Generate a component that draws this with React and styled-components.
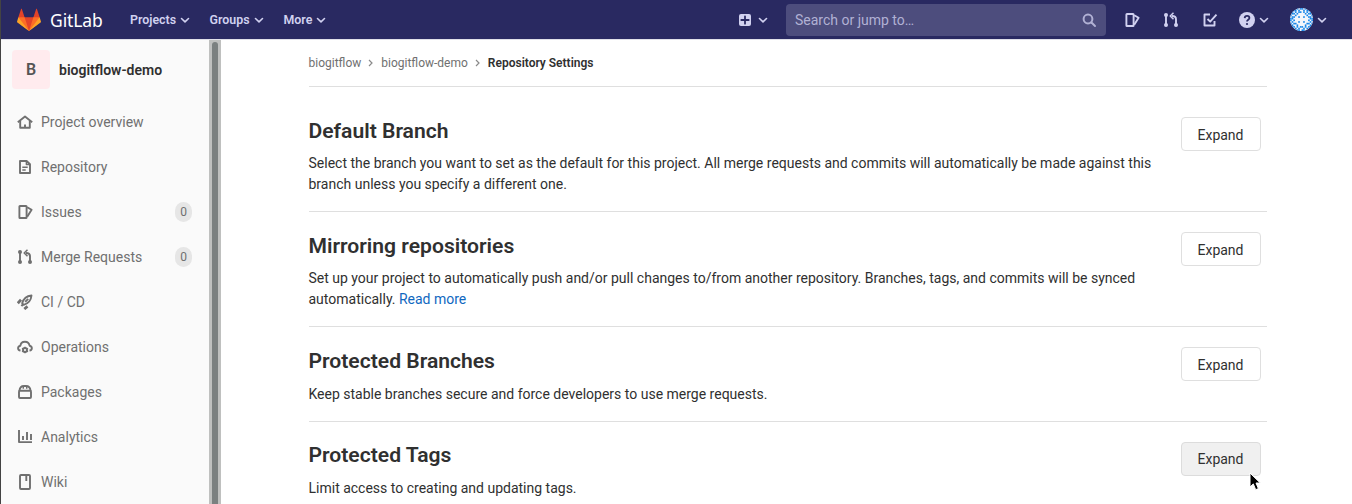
import React from 'react';
import styled, { createGlobalStyle } from 'styled-components';

const Global = createGlobalStyle`
  * { box-sizing: border-box; }
  html, body { margin: 0; height: 100%; overflow: hidden; background: #fff; }
  body { font-family: Roboto, "Noto Sans", sans-serif; font-size: 14px; color: #303030; }
  h2, p { margin: 0; }
`;
const Page = styled.div`
  position: relative;
  display: flex;
  flex-direction: column;
  height: 504px;
  border-left: 1px solid #434343;
  overflow: hidden;
`;
const Navbar = styled.header`
  display: flex;
  align-items: center;
  flex: none;
  height: 40px;
  background: #292961;
  border-bottom: 1px solid #dfdfe8;
  color: #d1d1f0;
`;
const Brand = styled.div`
  display: flex;
  align-items: center;
  width: 129px;
  padding-left: 16px;
  flex: none;
`;
const Wordmark = styled.span`
  margin-left: 9px;
  font: 400 17.5px/24px "Noto Sans", sans-serif;
  letter-spacing: -0.1px;
  color: #fff;
`;
const NavLink = styled.div`
  display: flex;
  align-items: center;
  flex: none;
  width: ${(p) => p.$width}px;
  font-size: 12.4px;
  font-weight: 600;
  svg { margin-left: 3px; }
`;
const NavIcon = styled.div`
  display: flex;
  align-items: center;
  flex: none;
  margin-left: ${(p) => p.$gap || 0}px;
  svg + svg { margin-left: ${(p) => p.$inner || 3}px; }
`;
const Search = styled.div`
  display: flex;
  align-items: center;
  justify-content: space-between;
  flex: none;
  width: 320px;
  height: 32px;
  margin-left: 17px;
  padding: 0 9px;
  border-radius: 4px;
  background: #4d4d7d;
  color: #b1b1d4;
`;
const Body = styled.div`
  display: flex;
  flex: 1;
  min-height: 0;
`;
const Sidebar = styled.nav`
  flex: none;
  width: 208px;
  background: #fafafa;
`;
const Scrollbar = styled.div`
  flex: none;
  width: 12px;
  padding: 2px 3px 0;
  background: #bfc0bf;
`;
const Thumb = styled.div`
  height: 480px;
  border-radius: 3px;
  background: #7b8080;
`;
const Project = styled.div`
  display: flex;
  align-items: center;
  height: 59px;
  padding-left: 10.5px;
  font-size: 14px;
  font-weight: 600;
`;
const ProjectAvatar = styled.div`
  display: grid;
  place-items: center;
  width: 38.5px;
  height: 39px;
  margin-right: 9px;
  padding-left: 0.5px;
  border-radius: 4px;
  background: #ffebee;
  color: #555;
  font-size: 16px;
`;
const Item = styled.div`
  display: flex;
  align-items: center;
  height: 45px;
  padding: 0 17px 0 16px;
  color: #707070;
  svg { margin-right: 8px; flex: none; }
`;
const Badge = styled.span`
  margin-left: auto;
  width: 17px;
  height: 20px;
  border-radius: 9px;
  background: #e6e6e6;
  font-size: 12px;
  line-height: 20px;
  text-align: center;
`;
const Main = styled.main`
  width: 958.5px;
  margin-left: 87.5px;
`;
const Breadcrumbs = styled.div`
  display: flex;
  align-items: center;
  height: 47px;
  border-bottom: 1px solid #dfdfdf;
  font-size: 12px;
  color: #707070;
  svg { margin: 0 6px 0 5px; }
  strong { font-weight: 600; color: #303030; }
`;
const Section = styled.section`
  display: flex;
  justify-content: space-between;
  align-items: flex-start;
  padding: ${(p) => (p.$first ? 30 : 20)}px 6px 16px 0;
  border-bottom: 1px solid #dfdfdf;
`;
const Title = styled.h2`
  margin: -0.2px 0 9.4px;
  font-size: 21.1px;
  font-weight: 600;
  line-height: 27px;
`;
const Description = styled.p`
  line-height: 21px;
  a { color: #1068bf; }
`;
const Button = styled.button`
  flex: none;
  width: 80px;
  height: 34px;
  padding: 1px 1px 0 0;
  border: 1px solid ${(p) => (p.$hover ? '#dcdcdc' : '#dfdfdf')};
  border-radius: 4px;
  background: ${(p) => (p.$hover ? '#f0f0f0' : '#fff')};
  color: #303030;
  font: 400 14px/20px Roboto, sans-serif;
`;
const Pointer = styled.svg`
  position: absolute;
  left: 1248px;
  top: 472px;
`;

const paths = {
  home: <><path d="M.8 8.2 8 2.6l7.2 5.6" /><path d="M3.2 7v6.8h9.6V7M8 14v-3.4" /></>,
  doc: <><path d="M3 2h6.6L13 5.3V14H3z" /><path d="M9.4 2v3.6H13M5.3 8.3h5.4M5.3 11h3.4" strokeWidth="1.5" /></>,
  issues: <><rect x="2.4" y="2" width="7.2" height="12" rx=".6" /><path d="m10.2 3.2 4.4 2.6-4.4 7" /></>,
  merge: <><path d="M3 3v10M13 13V7.2Q13 4 9 4" /><path d="M10.5.8 7.2 4l3.3 3.2" strokeWidth="1.5" /><g fill="currentColor" stroke="none"><circle cx="3" cy="3" r="2" /><circle cx="3" cy="13" r="2" /><circle cx="13" cy="13" r="2" /></g></>,
  rocket: <><path d="M5.2 9.3C6.3 5.2 9.4 2 14.5 1.5 14 6.6 10.8 9.7 6.7 10.8zM8.2 7.8l3-3" /><path d="M.8 9.2 4 5.8M7.3 15l3.2-2.6" strokeWidth="2.8" /><path d="m4.5 10.5 1.6 1.2" strokeWidth="2.8" /></>,
  cloud: <><path d="M3.5 11.5C.3 11 .3 7.3 3.4 6.7 4 1.5 11.6 1.2 12.6 6.7c3 .6 3 4.3-.1 4.8" /><circle cx="8" cy="11" r="2" /><path d="M8 7.7V9m0 4v1.3M5 9.3l1.3.8m3.4 1.8 1.3.8M5 12.7l1.3-.8m3.4-1.8L11 9.3" strokeWidth="1.4" /></>,
  box: <><rect x="2" y="6.7" width="12" height="7.3" rx="1" /><path d="M2.4 7C2.7 3.8 4.6 2 7 2h2c2.4 0 4.3 1.8 4.6 5" /><path d="M6.3 2.4v2.4M9.7 2.4v2.4" strokeWidth="1.5" /></>,
  chart: <><path d="M2 1v12.1h13" /><path d="M6 7v4M10 3v8M14 5v6" /></>,
  book: <><rect x="3" y="1" width="10" height="14" rx="1" /><path d="M9.3 1v6" /></>,
  todo: <><path d="M8 2.5H2.5v11h10V9" /><path d="m5.5 7 2.7 2.7 6.3-7" /></>,
  search: <><circle cx="7" cy="7" r="4.4" strokeWidth="2" /><path d="m10.5 10.5 3.5 3.5" strokeWidth="2" strokeLinecap="round" /></>,
};

function Icon({ name, size = 16 }) {
  return (
    <svg width={size} height={size} viewBox="0 0 16 16" fill="none" stroke="currentColor" strokeWidth="1.9" strokeLinejoin="round">
      {paths[name]}
    </svg>
  );
}
function Chevron() {
  return (
    <svg width="12" height="12" viewBox="0 0 12 12" fill="none" stroke="currentColor" strokeWidth="1.6" strokeLinecap="round" strokeLinejoin="round">
      <path d="m2.5 4.5 3.5 3.3 3.5-3.3" />
    </svg>
  );
}
function Crumb() {
  return (
    <svg width="9" height="10" viewBox="0 0 9 10" fill="none" stroke="#8a8a8a" strokeWidth="1.2">
      <path d="m3 2 3 3-3 3" />
    </svg>
  );
}
function Tanuki() {
  return (
    <svg width="24" height="24" viewBox="0 0 36 36">
      <path fill="#e24329" d="M2 14l9.38 9v-9l-4-12.28c-.205-.632-1.176-.632-1.38 0z" />
      <path fill="#e24329" d="M34 14l-9.38 9v-9l4-12.28c.205-.632 1.176-.632 1.38 0z" />
      <path fill="#e24329" d="M18 34.38 3 14 33 14z" />
      <path fill="#fc6d26" d="M18 34.38 11.38 14 2 14 6 25z" />
      <path fill="#fc6d26" d="M18 34.38 24.62 14 34 14 30 25z" />
      <path fill="#fca326" d="M2 14 .1 20.16c-.18.565 0 1.2.5 1.56l17.42 12.66z" />
      <path fill="#fca326" d="M34 14l1.9 6.16c.18.565 0 1.2-.5 1.56L18 34.38z" />
    </svg>
  );
}
function Plus() {
  return (
    <svg width="12" height="12" viewBox="0 0 12 12">
      <rect width="12" height="12" rx="2" fill="currentColor" />
      <path d="M6 2.3v7.4M2.3 6h7.4" stroke="#292961" strokeWidth="1.8" strokeLinecap="round" />
    </svg>
  );
}
function Help() {
  return (
    <svg width="16" height="16" viewBox="0 0 16 16">
      <circle cx="8" cy="8" r="8" fill="currentColor" />
      <path d="M5.7 6.1C5.8 3.2 10.4 3.3 10.4 6 10.4 7.8 8 7.7 8 9.6" fill="none" stroke="#292961" strokeWidth="1.8" />
      <circle cx="8" cy="12" r="1.1" fill="#292961" />
    </svg>
  );
}
const identicon = [
  '00001011010000',
  '00110100101100',
  '01010110101010',
  '01101000010110',
  '10010000001001',
  '01100100100110',
  '11000000000011',
  '10100000000101',
  '01000100100010',
  '10110000001101',
  '01001000010010',
  '01101011010110',
  '00010100101000',
  '00001101100000',
];
function UserAvatar() {
  const cell = 23 / 14;
  return (
    <svg width="23" height="23" viewBox="0 0 23 23">
      <defs><clipPath id="round"><circle cx="11.5" cy="11.5" r="11.5" /></clipPath></defs>
      <g clipPath="url(#round)">
        <rect width="23" height="23" fill="#f3f6fb" />
        {identicon.flatMap((row, y) => [...row].map((c, x) => c === '1' && (
          <rect key={`${x}-${y}`} x={x * cell} y={y * cell} width={cell} height={cell} fill="#1686e8" />
        )))}
      </g>
    </svg>
  );
}

const items = [
  ['home', 'Project overview'],
  ['doc', 'Repository'],
  ['issues', 'Issues', '0'],
  ['merge', 'Merge Requests', '0'],
  ['rocket', 'CI / CD'],
  ['cloud', 'Operations'],
  ['box', 'Packages'],
  ['chart', 'Analytics'],
  ['book', 'Wiki'],
];
const sections = [
  ['Default Branch', <>Select the branch you want to set as the default for this project. All merge requests and commits will automatically be made against this<br />branch unless you specify a different one.</>],
  ['Mirroring repositories', <>Set up your project to automatically push and/or pull changes to/from another repository. Branches, tags, and commits will be synced<br />automatically. <a>Read more</a></>],
  ['Protected Branches', 'Keep stable branches secure and force developers to use merge requests.'],
  ['Protected Tags', 'Limit access to creating and updating tags.'],
];

export default function App() {
  return (
    <Page>
      <Global />
      <Navbar>
        <Brand><Tanuki /><Wordmark>GitLab</Wordmark></Brand>
        <NavLink $width={79.5}>Projects<Chevron /></NavLink>
        <NavLink $width={74}>Groups<Chevron /></NavLink>
        <NavLink $width={455.5}>More<Chevron /></NavLink>
        <NavIcon $inner={6}><Plus /><Chevron /></NavIcon>
        <Search>Search or jump to…<Icon name="search" /></Search>
        <NavIcon $gap={18}><Icon name="issues" /></NavIcon>
        <NavIcon $gap={23}><Icon name="merge" /></NavIcon>
        <NavIcon $gap={23}><Icon name="todo" /></NavIcon>
        <NavIcon $gap={21}><Help /><Chevron /></NavIcon>
        <NavIcon $gap={20}><UserAvatar /><Chevron /></NavIcon>
      </Navbar>
      <Body>
        <Sidebar>
          <Project><ProjectAvatar>B</ProjectAvatar>biogitflow-demo</Project>
          {items.map(([icon, label, count]) => (
            <Item key={label}><Icon name={icon} />{label}{count && <Badge>{count}</Badge>}</Item>
          ))}
        </Sidebar>
        <Scrollbar><Thumb /></Scrollbar>
        <Main>
          <Breadcrumbs>biogitflow<Crumb />biogitflow-demo<Crumb /><strong>Repository Settings</strong></Breadcrumbs>
          {sections.map(([title, text], i) => (
            <Section key={title} $first={i === 0}>
              <div><Title>{title}</Title><Description>{text}</Description></div>
              <Button $hover={i === 3}>Expand</Button>
            </Section>
          ))}
        </Main>
      </Body>
      <Pointer width="12" height="20" viewBox="0 0 12 20">
        <path d="M1 1v14l3.3-3.1 2.4 5.8 2.7-1.1L7 11h4.3z" fill="#000" stroke="#fff" strokeWidth="1" />
      </Pointer>
    </Page>
  );
}
